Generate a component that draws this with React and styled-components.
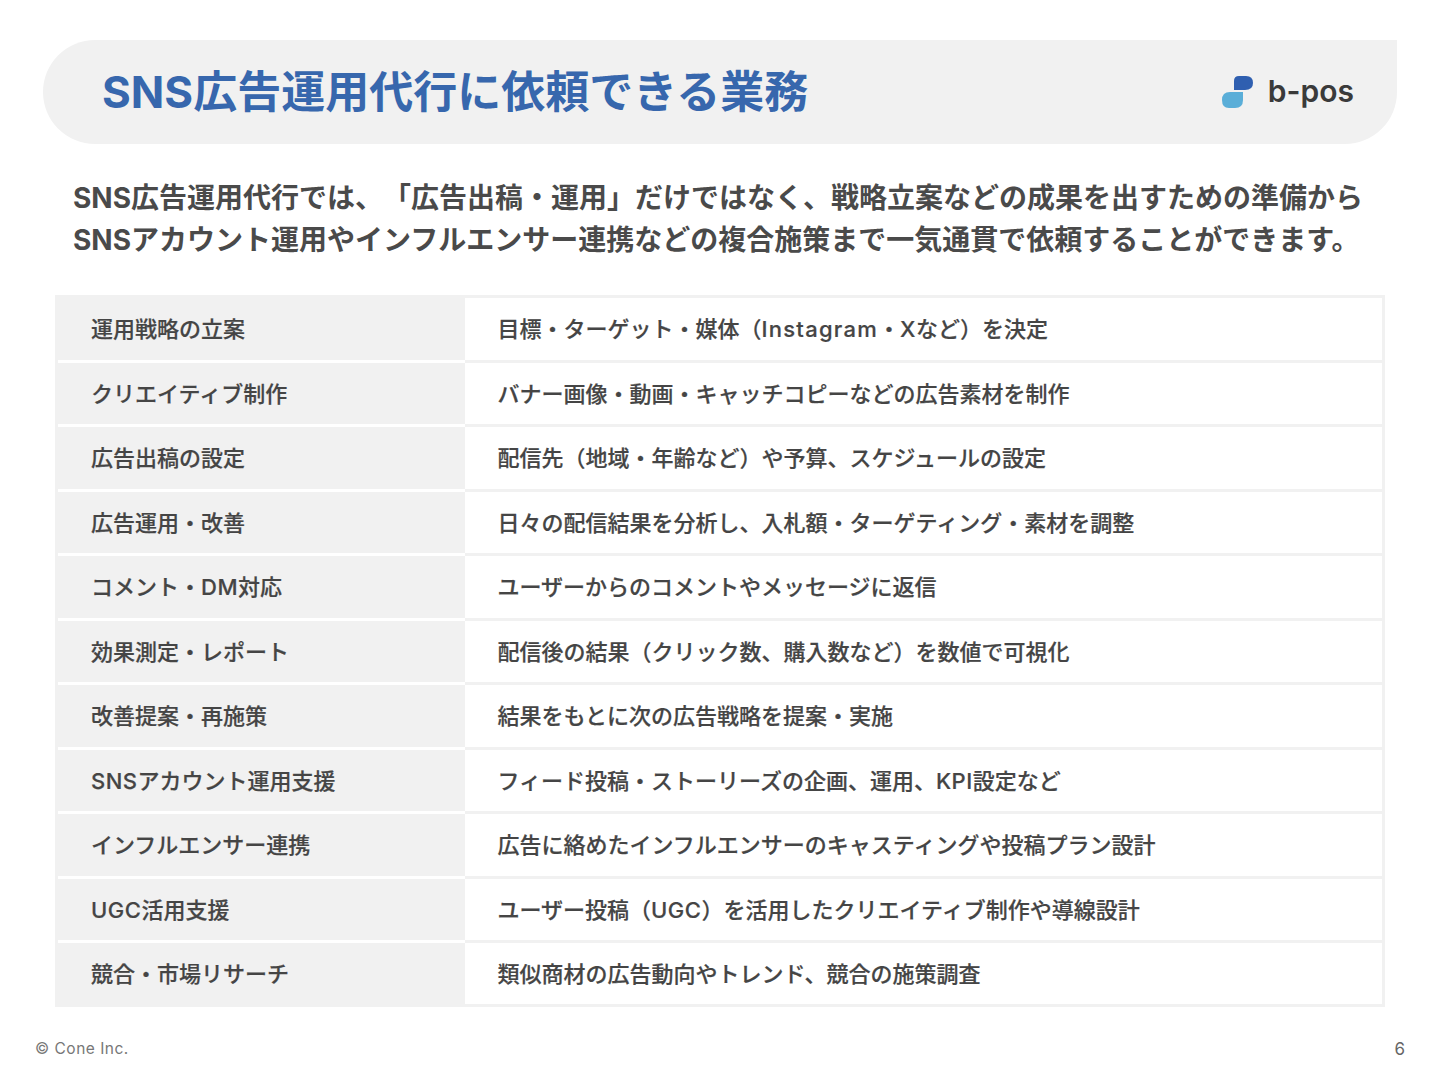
import React from "react";
import styled, { createGlobalStyle } from "styled-components";

const FONT = `Inter, "Noto Sans CJK JP", sans-serif`;

const Global = createGlobalStyle`
  html, body { margin: 0; padding: 0; background: #fff; }
  body { font-family: ${FONT}; text-spacing-trim: space-all; }
`;

const Page = styled.div`
  width: 1440px;
  height: 1080px;
  box-sizing: border-box;
  padding-top: 40px;
  display: flex;
  flex-direction: column;
  overflow: hidden;
`;

const Header = styled.header`
  margin: 0 43px;
  height: 104px;
  box-sizing: border-box;
  padding: 0 43px 0 59px;
  display: flex;
  align-items: center;
  justify-content: space-between;
  background: #f1f1f1;
  border-radius: 52px 0 52px 52px;
`;

const Title = styled.h1`
  margin: 0;
  font-size: 44px;
  line-height: 104px;
  font-weight: 700;
  color: #3767ad;
  white-space: nowrap;
`;

const Logo = styled.div`
  display: flex;
  align-items: center;
  gap: 15px;
`;

const LogoText = styled.span`
  font-size: 30px;
  font-weight: 600;
  color: #3a3a3a;
  line-height: 40px;
  padding-bottom: 2px;
`;

const Intro = styled.p`
  margin: 33px 0 0;
  padding: 0 73px;
  font-size: 28px;
  line-height: 42px;
  font-weight: 700;
  color: #4a4a4a;
  white-space: nowrap;
`;

const Table = styled.div`
  margin: 34px 55px 0;
  width: 1330px;
  height: 712px;
  display: grid;
  grid-template-columns: 407px 1fr;
  grid-template-rows: repeat(10, 64.5px) 61px;
  box-sizing: border-box;
  border: 3px solid #f1f1f1;
  background: #f1f1f1;
`;

const Cell = styled.div`
  display: flex;
  align-items: center;
  box-sizing: border-box;
  padding: 0 0 3.5px 33px;
  font-size: 22px;
  font-weight: 500;
  color: #454545;
  white-space: nowrap;
  -webkit-text-stroke: 0.2px #454545;
`;

const Label = styled(Cell)`
  background: #f1f1f1;
  border-bottom: ${(p) => (p.$last ? "0" : "3px solid #fff")};
`;

const Value = styled(Cell)`
  padding-left: 32.5px;
  background: #fff;
  border-bottom: ${(p) => (p.$last ? "0" : "3px solid #f1f1f1")};
`;

const CellText = styled.span`
  display: block;
`;

const Latin = styled.span`
  letter-spacing: ${(p) => (p.$lower ? "1.25px" : "0.5px")};
`;

const Footer = styled.footer`
  margin: 33px 35px 0;
  display: flex;
  justify-content: space-between;
  align-items: center;
  color: #777;
`;

const Copy = styled.span`
  font-size: 15.5px;
  line-height: 18px;
  font-weight: 400;
  letter-spacing: 0.5px;
`;

const PageNo = styled.span`
  font-size: 17px;
  line-height: 18px;
  color: #666;
`;

const rows = [
  ["運用戦略の立案", "目標・ターゲット・媒体（Instagram・Xなど）を決定"],
  ["クリエイティブ制作", "バナー画像・動画・キャッチコピーなどの広告素材を制作"],
  ["広告出稿の設定", "配信先（地域・年齢など）や予算、スケジュールの設定"],
  ["広告運用・改善", "日々の配信結果を分析し、入札額・ターゲティング・素材を調整"],
  ["コメント・DM対応", "ユーザーからのコメントやメッセージに返信"],
  ["効果測定・レポート", "配信後の結果（クリック数、購入数など）を数値で可視化"],
  ["改善提案・再施策", "結果をもとに次の広告戦略を提案・実施"],
  ["SNSアカウント運用支援", "フィード投稿・ストーリーズの企画、運用、KPI設定など"],
  ["インフルエンサー連携", "広告に絡めたインフルエンサーのキャスティングや投稿プラン設計"],
  ["UGC活用支援", "ユーザー投稿（UGC）を活用したクリエイティブ制作や導線設計"],
  ["競合・市場リサーチ", "類似商材の広告動向やトレンド、競合の施策調査"],
];

const withLatin = (text) =>
  text.split(/([A-Za-z]+)/).map((part, i) =>
    i % 2 === 1 ? (
      <Latin key={i} $lower={/[a-z]/.test(part)}>
        {part}
      </Latin>
    ) : (
      part
    )
  );

const LogoMark = () => (
  <svg width="31" height="32" viewBox="0 0 31 32" aria-hidden="true">
    <path d="M12 14V5Q12 0 17 0H24Q31 0 31 7Q31 14 23 14Z" fill="#2f5fb0" />
    <path d="M0 24Q0 16 8 16H21V24Q21 32 13 32H7Q0 32 0 24Z" fill="#5aaed8" />
  </svg>
);

export default function App() {
  return (
    <Page>
      <Global />
      <Header>
        <Title>SNS広告運用代行に依頼できる業務</Title>
        <Logo>
          <LogoMark />
          <LogoText>b-pos</LogoText>
        </Logo>
      </Header>
      <Intro>
        SNS広告運用代行では、「広告出稿・運用」だけではなく、戦略立案などの成果を出すための準備から
        <br />
        SNSアカウント運用やインフルエンサー連携などの複合施策まで一気通貫で依頼することができます。
      </Intro>
      <Table>
        {rows.map(([a, b], i) => (
          <React.Fragment key={a}>
            <Label $last={i === rows.length - 1}>
              <CellText>{withLatin(a)}</CellText>
            </Label>
            <Value $last={i === rows.length - 1}>
              <CellText>{withLatin(b)}</CellText>
            </Value>
          </React.Fragment>
        ))}
      </Table>
      <Footer>
        <Copy>© Cone Inc.</Copy>
        <PageNo>6</PageNo>
      </Footer>
    </Page>
  );
}
